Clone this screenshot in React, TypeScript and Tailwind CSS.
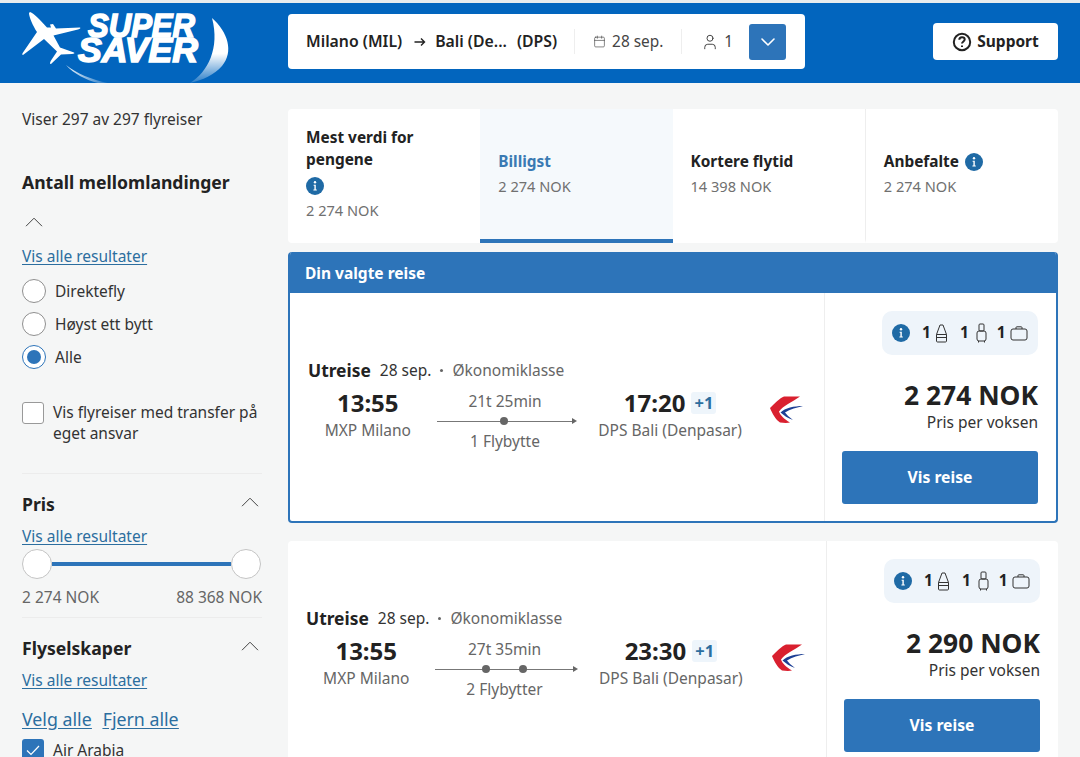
import { ChevronDown, Calendar, User } from 'lucide-react';

function InfoDot({ size = 18 }: { size?: number }) {
  return (
    <svg width={size} height={size} viewBox="0 0 18 18" className="shrink-0">
      <circle cx="9" cy="9" r="9" fill="#1f6aa5" />
      <circle cx="9" cy="5.2" r="1.2" fill="#fff" />
      <path d="M7.6 7.8H9.8V12.6H10.8V13.6H7.4V12.6H8.4V8.8H7.6Z" fill="#fff" />
    </svg>
  );
}

function ChevronUp({ className = '' }: { className?: string }) {
  return (
    <svg width="18" height="10" viewBox="0 0 18 10" className={className} fill="none" stroke="#444" strokeWidth="1">
      <path d="M1 9.2L9 1.2L17 9.2" />
    </svg>
  );
}

function Logo() {
  return (
    <svg width="288" height="80" viewBox="0 3 288 80" className="shrink-0">
      <defs>
        <linearGradient id="fade" x1="0" y1="0" x2="0" y2="1">
          <stop offset="0" stopColor="#fff" />
          <stop offset="0.55" stopColor="#fff" />
          <stop offset="1" stopColor="#fff" stopOpacity="0.15" />
        </linearGradient>
        <linearGradient id="fadeLow" x1="0" y1="0" x2="1" y2="0">
          <stop offset="0" stopColor="#fff" stopOpacity="0.95" />
          <stop offset="1" stopColor="#fff" stopOpacity="0.1" />
        </linearGradient>
      </defs>
      {/* plane */}
      <path
        d="M30 12C34 13 41 21 47 27.5L51 27.5L50 24.5L53 24L56 28.5L80 27.5C81 28 80 29 78 29.5L53.5 35.5L60 47.5L74 52.5C75 53 74 54 72 54L61 54.5L51 64C49.5 64.5 50 62 51 60.5L57 51.5L44 39L23 55C22 55 22 54 23 52.5L37 32C33 26 29 17 29 13Z"
        fill="#fff"
      />
      <text
        x="88"
        y="37"
        fill="#fff"
        stroke="#fff"
        strokeWidth="1.6"
        fontFamily="'Liberation Sans', sans-serif"
        fontWeight="700"
        fontStyle="italic"
        fontSize="34"
        textLength="107"
        lengthAdjust="spacingAndGlyphs"
      >
        SUPER
      </text>
      <text
        x="78"
        y="62"
        fill="#fff"
        stroke="#fff"
        strokeWidth="1.6"
        fontFamily="'Liberation Sans', sans-serif"
        fontWeight="700"
        fontStyle="italic"
        fontSize="35"
        textLength="120"
        lengthAdjust="spacingAndGlyphs"
      >
        SAVER
      </text>
      <path d="M212 18C228 32 234 52 222 66C214 75 203 80 190 83C208 72 220 48 212 18Z" fill="url(#fade)" />
      <path d="M66 65C76 73 92 80 108 83L98 83C86 80 74 74 66 65Z" fill="url(#fadeLow)" />
    </svg>
  );
}

function EasternLogo() {
  return (
    <svg width="33" height="27" viewBox="0 0 33 27" className="shrink-0">
      <path d="M30 0.5H14C10 2 4 8 0 12C2 17 6 24 10 26.5C14 27 18 27 20 26.5C14 23 10 19 9 15.5C13 10 22 6 30 0.5Z" fill="#d9202f" />
      <path d="M33 10C24 10 15 12 10.5 16.5C13.5 19 18 22.5 23 24C19 21 16.5 18.5 15 16.5C20 13 27 11.5 33 10Z" fill="#1d3f94" />
    </svg>
  );
}

function BagSmall() {
  return (
    <svg width="13" height="19" viewBox="0 0 13 19" fill="none" stroke="#333" strokeWidth="1" className="shrink-0">
      <path d="M5 1H8L11.5 10.5V17C11.5 17.6 11.1 18 10.5 18H2.5C1.9 18 1.5 17.6 1.5 17V10.5Z" />
      <path d="M1.5 10.5H11.5M1.5 13.5H11.5" />
    </svg>
  );
}

function BagCabin() {
  return (
    <svg width="13" height="20" viewBox="0 0 13 20" fill="none" stroke="#333" strokeWidth="1" className="shrink-0">
      <rect x="4" y="1" width="5" height="7" rx="1" />
      <rect x="2" y="8" width="9" height="10" rx="2" />
      <path d="M3.5 18V19.5M9.5 18V19.5" />
    </svg>
  );
}

function BagHold() {
  return (
    <svg width="18" height="15" viewBox="0 0 18 15" fill="none" stroke="#333" strokeWidth="1" className="shrink-0">
      <rect x="1" y="3" width="16" height="11" rx="2" />
      <path d="M6 3V1.5C6 1 6.4 0.8 7 0.8H11C11.6 0.8 12 1 12 1.5V3" />
    </svg>
  );
}

function Radio({ label, checked = false }: { label: string; checked?: boolean }) {
  return (
    <div className="flex items-center h-6">
      <div
        className={`w-6 h-6 rounded-full bg-white border flex items-center justify-center ${
          checked ? 'border-[#2d74b9]' : 'border-[#8f8f8f]'
        }`}
      >
        {checked && <div className="w-[14px] h-[14px] rounded-full bg-[#2d74b9]" />}
      </div>
      <span className="ml-[9px] pt-px text-[15.5px] text-[#333]">{label}</span>
    </div>
  );
}

function ResetLink({ className = '' }: { className?: string }) {
  return (
    <a className={`block h-5 leading-5 text-[15.5px] text-[#2c6e9f] underline underline-offset-2 ${className}`}>
      Vis alle resultater
    </a>
  );
}

function Sidebar() {
  return (
    <aside className="w-[288px] shrink-0 pl-[22px] pr-[26px]">
      <p className="h-5 leading-5 text-[15.5px] text-[#333]">Viser 297 av 297 flyreiser</p>
      <h3 className="mt-[41px] h-6 leading-6 text-[17.6px] font-bold text-[#222]">Antall mellomlandinger</h3>
      <ChevronUp className="mt-[23px] ml-[3px]" />
      <ResetLink className="mt-[19px]" />
      <div className="mt-[13px] flex flex-col gap-[9px]">
        <Radio label="Direktefly" />
        <Radio label="Høyst ett bytt" />
        <Radio label="Alle" checked />
      </div>
      <div className="mt-[33px] flex items-start">
        <div className="w-[22px] h-[22px] shrink-0 rounded-[3px] bg-white border border-[#999]" />
        <span className="ml-[9px] text-[15.5px] leading-[21px] text-[#333]">
          Vis flyreiser med transfer på eget ansvar
        </span>
      </div>
      <div className="mt-[29px] h-px bg-[#ececec]" />
      <div className="mt-[18px] h-6 flex items-center justify-between">
        <h3 className="text-[17.6px] font-bold text-[#222]">Pris</h3>
        <ChevronUp className="mr-[3px] -mt-1" />
      </div>
      <ResetLink className="mt-[10px]" />
      <div className="mt-[3px] flex items-center w-[239px]">
        <div className="w-[30px] h-[30px] rounded-full bg-white border border-[#c4c4c4]" />
        <div className="flex-1 h-1 bg-[#2d74b9]" />
        <div className="w-[30px] h-[30px] rounded-full bg-white border border-[#c4c4c4]" />
      </div>
      <div className="mt-2 h-5 leading-5 flex justify-between text-[15.5px] text-[#666] w-[240px] whitespace-nowrap">
        <span>2 274 NOK</span>
        <span>88 368 NOK</span>
      </div>
      <div className="mt-[10px] h-px bg-[#ececec]" />
      <div className="mt-[18px] h-6 flex items-center justify-between">
        <h3 className="text-[17.6px] font-bold text-[#222]">Flyselskaper</h3>
        <ChevronUp className="mr-[3px] -mt-1" />
      </div>
      <ResetLink className="mt-[10px]" />
      <div className="mt-[18px] h-6 leading-[23px] flex gap-[11px] text-[17.8px] text-[#2c6e9f] underline underline-offset-2">
        <a>Velg alle</a>
        <a>Fjern alle</a>
      </div>
      <div className="mt-[7px] flex items-start">
        <div className="w-[22px] h-[22px] shrink-0 rounded-[3px] bg-[#2d74b9] flex items-center justify-center">
          <svg width="14" height="11" viewBox="0 0 14 11" fill="none" stroke="#fff" strokeWidth="1.2">
            <path d="M1 5.5L5 9.5L13 1" />
          </svg>
        </div>
        <span className="ml-[9px] pt-px text-[15.5px] leading-[21px] text-[#333]">Air Arabia</span>
      </div>
    </aside>
  );
}

const tabs = [
  { title: 'Mest verdi for pengene', price: '2 274 NOK', info: 'below' },
  { title: 'Billigst', price: '2 274 NOK', active: true },
  { title: 'Kortere flytid', price: '14 398 NOK', divider: true },
  { title: 'Anbefalte', price: '2 274 NOK', info: 'inline' },
];

function Tabs() {
  return (
    <div className="flex h-[134px] rounded-[4px] bg-white overflow-hidden">
      {tabs.map((tab) => (
        <div
          key={tab.title}
          className={`flex-1 pl-[18px] pr-[12px] flex flex-col justify-center border-b-4 ${
            tab.active ? 'bg-[#f5f9fc] border-[#2d74b9]' : 'border-transparent'
          } ${tab.divider ? 'border-r border-r-[#eeeeee]' : ''} ${tab.info === 'below' ? 'pb-[2px]' : 'pb-[1px]'}`}
        >
          <div className={`flex items-center gap-[6px] text-[15.4px] leading-[22px] font-bold ${tab.active ? 'text-[#3a7ab3]' : 'text-[#222]'}`}>
            <span>{tab.title}</span>
            {tab.info === 'inline' && <InfoDot />}
          </div>
          {tab.info === 'below' && (
            <div className="mt-[6px]">
              <InfoDot />
            </div>
          )}
          <div className={`text-[14.6px] leading-5 text-[#707070] ${tab.info === 'below' ? 'mt-[5px]' : 'mt-[3px]'}`}>{tab.price}</div>
        </div>
      ))}
    </div>
  );
}

type Flight = {
  duration: string;
  stops: string;
  stopCount: number;
  arrival: string;
  price: string;
};

function FlightBody({ flight }: { flight: Flight }) {
  return (
    <div className="flex h-[228px]">
      <div className="flex-1 pt-[67px] px-[18px]">
        <div className="h-5 leading-5 flex items-center whitespace-nowrap">
          <span className="text-[17.4px] font-bold text-[#222]">Utreise</span>
          <span className="ml-[9px] text-[15.5px] text-[#333]">28 sep.</span>
          <span className="mx-[9px] w-[3px] h-[3px] rounded-full bg-[#666]" />
          <span className="text-[15.5px] text-[#666]">Økonomiklasse</span>
        </div>
        <div className="mt-2 flex items-start">
          <div className="w-[24%] text-center">
            <div className="h-[30px] leading-[30px] text-[24px] font-bold text-[#222]">13:55</div>
            <div className="mt-[2px] h-5 leading-5 text-[15.5px] text-[#666]">MXP Milano</div>
          </div>
          <div className="ml-[9px] w-[28.3%] mt-[3px] text-center text-[15.5px] text-[#666]">
            <div className="h-5 leading-5 pr-[4px]">{flight.duration}</div>
            <div className="h-5 flex items-center">
              <div className="flex-1 h-px bg-[#777] relative flex items-center justify-center gap-[29px]">
                {Array.from({ length: flight.stopCount }).map((_, i) => (
                  <span key={i} className="w-2 h-2 rounded-full bg-[#666]" />
                ))}
              </div>
              <div className="w-0 h-0 border-y-[3.5px] border-y-transparent border-l-[5px] border-l-[#666]" />
            </div>
            <div className="h-5 leading-5 pr-[4px]">{flight.stops}</div>
          </div>
          <div className="w-[37.2%] text-center">
            <div className="h-[30px] flex items-center justify-center gap-[6px]">
              <span className="text-[24px] font-bold text-[#222]">{flight.arrival}</span>
              <span className="px-[3px] h-[22px] leading-[22px] rounded-[3px] bg-[#eef5fb] text-[16.5px] font-bold text-[#2c6e9f]">+1</span>
            </div>
            <div className="mt-[2px] h-5 leading-5 text-[15.5px] text-[#666] whitespace-nowrap">DPS Bali (Denpasar)</div>
          </div>
          <div className="ml-auto mr-[3px] mt-[8px]">
            <EasternLogo />
          </div>
        </div>
      </div>
      <div className="w-[232px] shrink-0 border-l border-[#eeeeee] pt-[18px] pl-[17px] pr-[18px] flex flex-col items-end">
        <div className="w-[156px] h-[44px] shrink-0 rounded-[10px] bg-[#eef4fa] flex items-center pl-[10px] text-[15.5px] font-bold text-[#222]">
          <InfoDot />
          <span className="ml-[12px]">1</span>
          <span className="ml-[4px]"><BagSmall /></span>
          <span className="ml-[12px]">1</span>
          <span className="ml-[6px]"><BagCabin /></span>
          <span className="ml-[9px]">1</span>
          <span className="ml-[4px]"><BagHold /></span>
        </div>
        <div className="mt-[23px] h-[34px] leading-[34px] text-[26.4px] font-bold text-[#222] whitespace-nowrap">{flight.price}</div>
        <div className="h-5 leading-5 text-[15.5px] text-[#333]">Pris per voksen</div>
        <button className="mt-[19px] w-full h-[53px] shrink-0 rounded-[3px] bg-[#2d74b9] text-[15.7px] font-bold text-white">
          Vis reise
        </button>
      </div>
    </div>
  );
}

function SearchBar() {
  return (
    <div className="mt-[11px] w-[517px] h-[55px] rounded-[4px] bg-white flex items-center pl-[18px] pr-[19px] text-[#222]">
      <span className="text-[15.8px] font-semibold whitespace-nowrap">Milano (MIL)</span>
      <svg width="12" height="10" viewBox="0 0 12 10" className="ml-[12px] mr-[9px] shrink-0" fill="none" stroke="#222" strokeWidth="1.4">
        <path d="M0.5 5H10M7 1.5L10.5 5L7 8.5" />
      </svg>
      <span className="text-[15.8px] font-semibold whitespace-nowrap">Bali (De...</span>
      <span className="ml-[10px] text-[15.8px] font-semibold whitespace-nowrap">(DPS)</span>
      <div className="ml-[17px] w-px h-[25px] bg-[#eeeeee]" />
      <Calendar size={13} strokeWidth={1.2} className="ml-[18px] text-[#444]" />
      <span className="ml-[6px] text-[15.4px] text-[#444] whitespace-nowrap">28 sep.</span>
      <div className="ml-[18px] w-px h-[25px] bg-[#eeeeee]" />
      <User size={18} strokeWidth={1.2} className="ml-[19px] text-[#333]" />
      <span className="ml-[5px] text-[15.4px] text-[#444]">1</span>
      <button className="ml-auto w-[37px] h-[36px] rounded-[3px] bg-[#2d74b9] flex items-center justify-center">
        <ChevronDown size={24} strokeWidth={1.6} className="text-white" />
      </button>
    </div>
  );
}

export default function App() {
  return (
    <div className="w-[1080px] h-[757px] overflow-hidden bg-[#f5f6f6] font-['Noto_Sans',sans-serif]">
      <div className="h-[3px] bg-[#e8ecee]" />
      <header className="h-[80px] bg-[#0265be] flex items-start">
        <Logo />
        <SearchBar />
        <button className="ml-auto mr-[22px] mt-[20px] w-[125px] h-[37px] rounded-[4px] bg-white flex items-center justify-center gap-[5px] text-[15.5px] font-bold text-[#222]">
          <svg width="20" height="20" viewBox="0 0 20 20" fill="none" stroke="#222" strokeWidth="2">
            <circle cx="10" cy="10" r="8.2" />
            <path d="M7.3 7.8C7.3 6.2 8.5 5.3 10 5.3C11.6 5.3 12.7 6.2 12.7 7.6C12.7 9.4 10 9.6 10 11.6" />
            <path d="M10 13.4V15" />
          </svg>
          Support
        </button>
      </header>
      <main className="flex pt-[26px]">
        <Sidebar />
        <section className="w-[770px] shrink-0">
          <Tabs />
          <div className="mt-[9px] rounded-[4px] overflow-hidden border-x-2 border-b-2 border-[#2d74b9] bg-white">
            <div className="-mx-[2px] h-[41px] leading-[42px] pl-[17px] bg-[#2d74b9] text-[15.5px] font-bold text-white">
              Din valgte reise
            </div>
            <FlightBody
              flight={{ duration: '21t 25min', stops: '1 Flybytte', stopCount: 1, arrival: '17:20', price: '2 274 NOK' }}
            />
          </div>
          <div className="mt-[18px] rounded-[4px] bg-white">
            <FlightBody
              flight={{ duration: '27t 35min', stops: '2 Flybytter', stopCount: 2, arrival: '23:30', price: '2 290 NOK' }}
            />
          </div>
        </section>
      </main>
    </div>
  );
}
